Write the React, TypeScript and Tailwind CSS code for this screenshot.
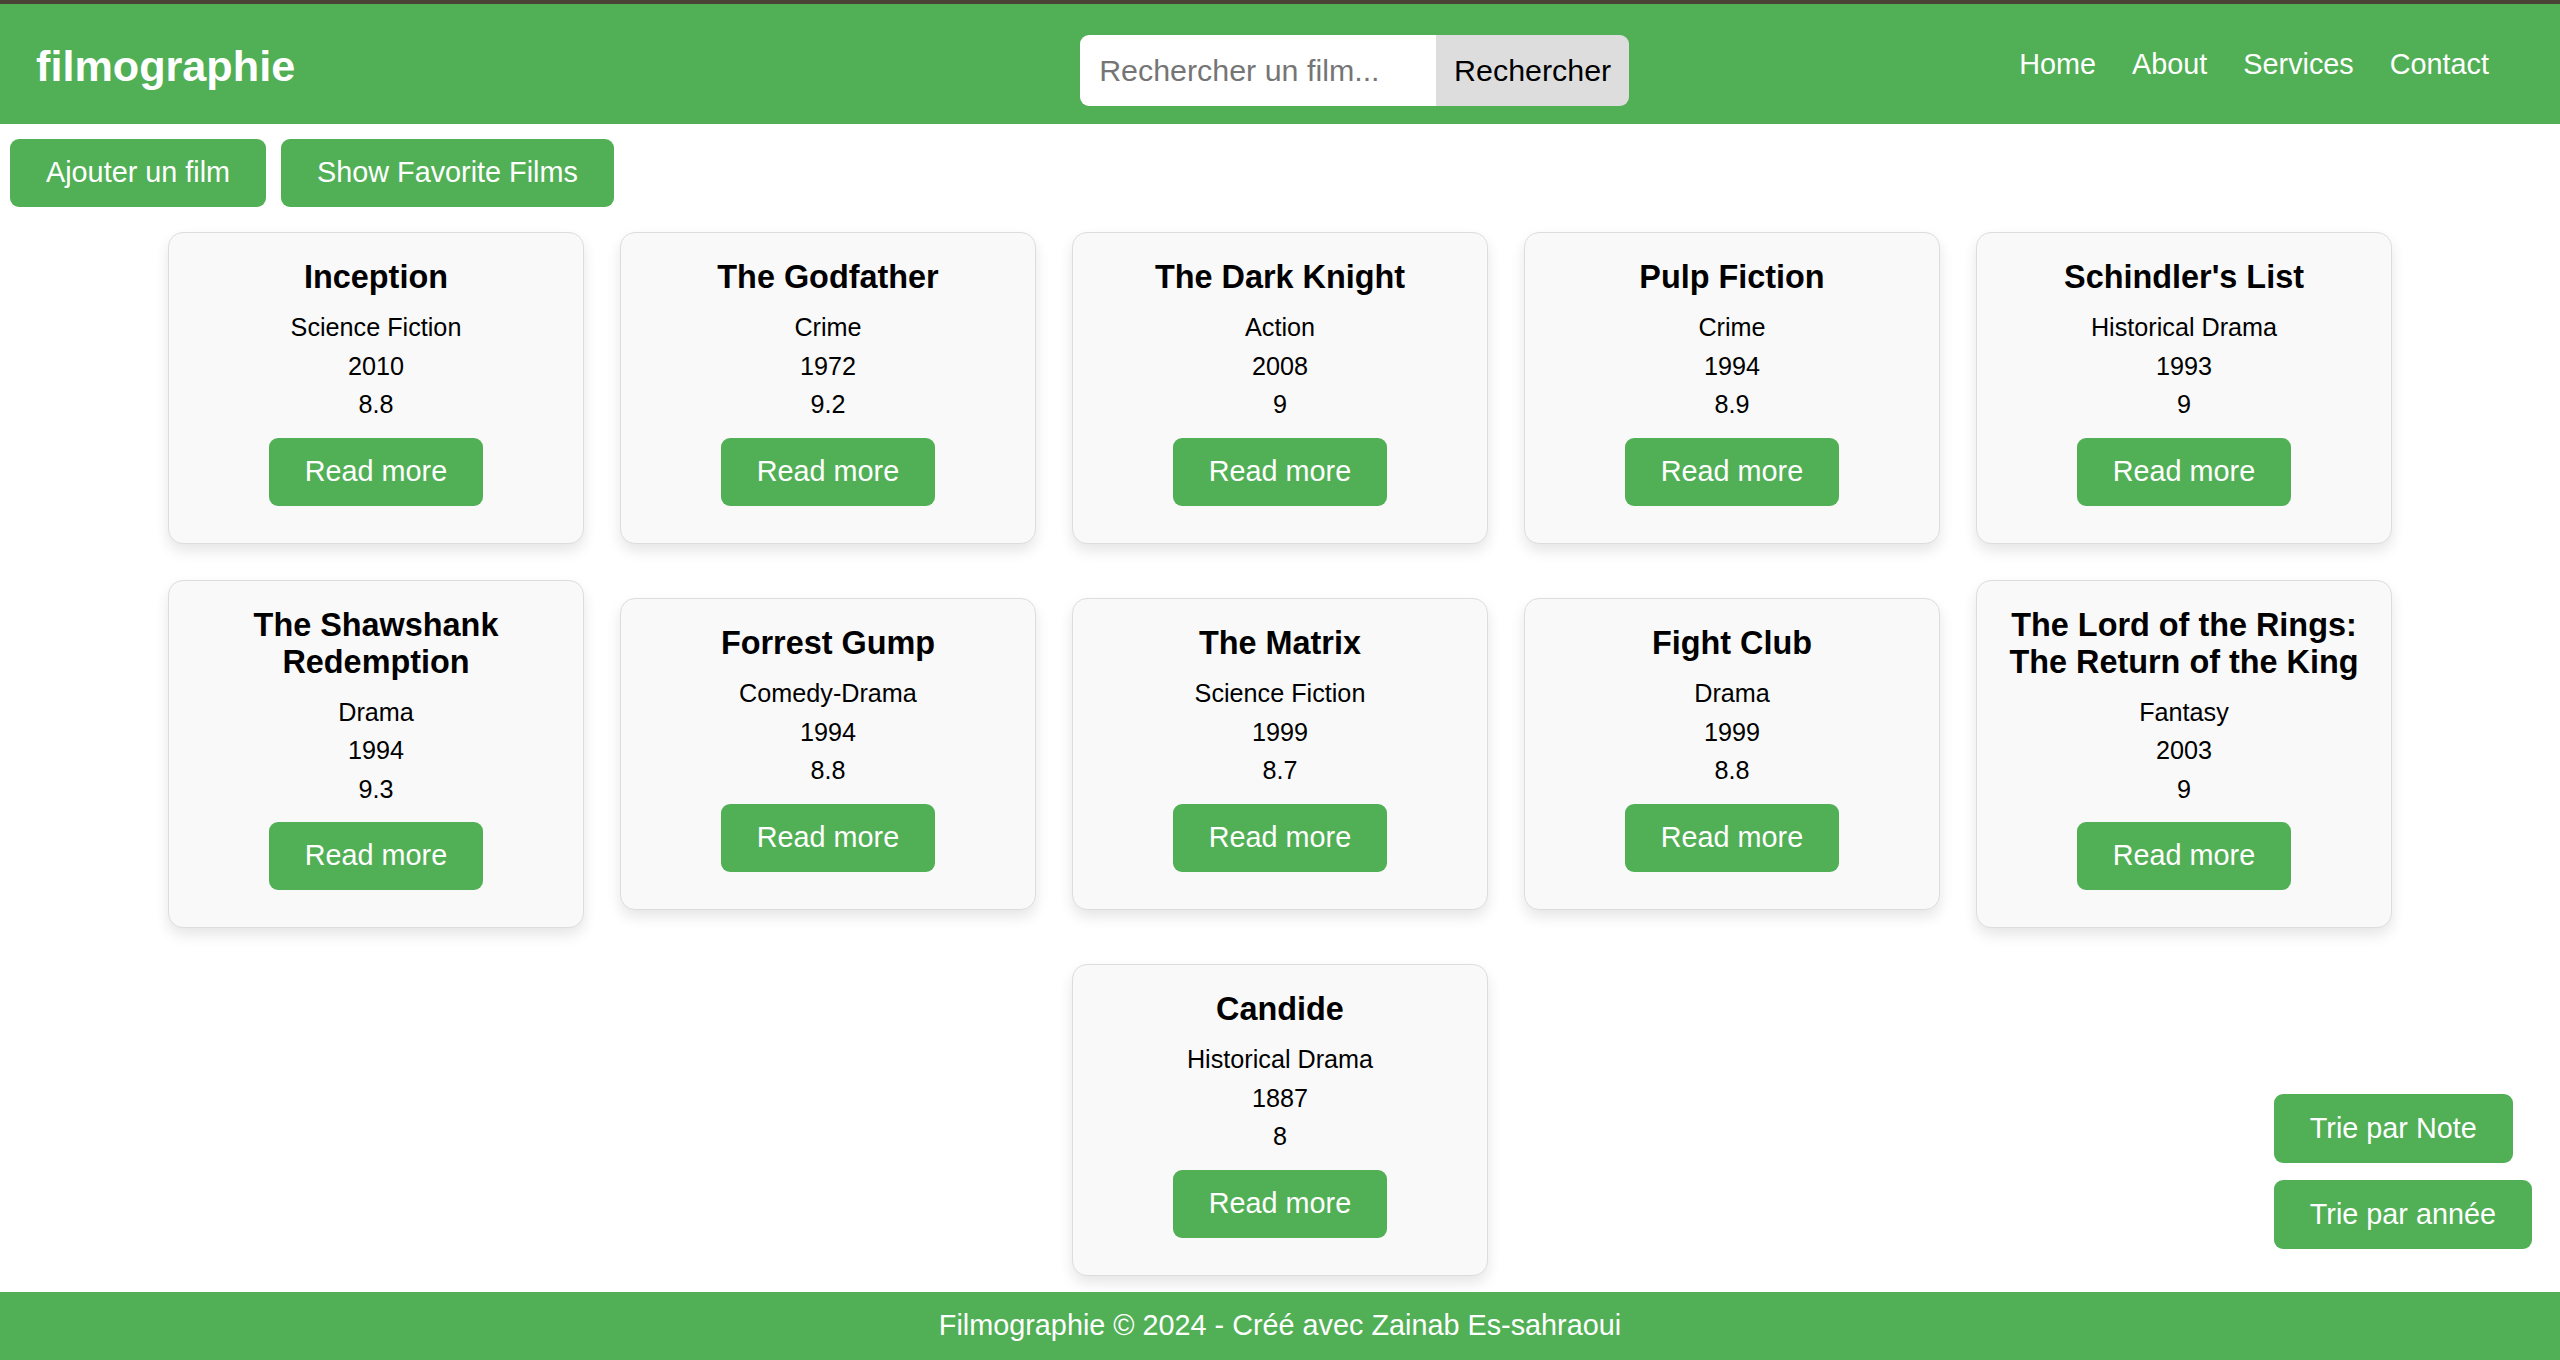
import React from 'react';

type Film = { title: string; genre: string; year: number; rating: number };

const films: Film[] = [
  { title: 'Inception', genre: 'Science Fiction', year: 2010, rating: 8.8 },
  { title: 'The Godfather', genre: 'Crime', year: 1972, rating: 9.2 },
  { title: 'The Dark Knight', genre: 'Action', year: 2008, rating: 9 },
  { title: 'Pulp Fiction', genre: 'Crime', year: 1994, rating: 8.9 },
  { title: "Schindler's List", genre: 'Historical Drama', year: 1993, rating: 9 },
  { title: 'The Shawshank Redemption', genre: 'Drama', year: 1994, rating: 9.3 },
  { title: 'Forrest Gump', genre: 'Comedy-Drama', year: 1994, rating: 8.8 },
  { title: 'The Matrix', genre: 'Science Fiction', year: 1999, rating: 8.7 },
  { title: 'Fight Club', genre: 'Drama', year: 1999, rating: 8.8 },
  { title: 'The Lord of the Rings: The Return of the King', genre: 'Fantasy', year: 2003, rating: 9 },
  { title: 'Candide', genre: 'Historical Drama', year: 1887, rating: 8 },
];

const FilmCard = (props: { film: Film }): React.ReactNode => {
  const { film } = props;
  return (
    <div className="m-[18px] w-[416px] rounded-[15px] border border-[#dddddd] bg-[#f9f9f9] px-[27px] pt-[26px] pb-[37px] text-center shadow-[0_7px_14px_rgba(0,0,0,0.1)]">
      <h3 className="mb-[17px] text-[32.4px] leading-[37px] font-bold text-black">{film.title}</h3>
      <p className="text-[25.2px] leading-[29px] text-black">{film.genre}</p>
      <p className="mt-[9.5px] text-[25.2px] leading-[29px] text-black">{film.year}</p>
      <p className="mt-[9.5px] text-[25.2px] leading-[29px] text-black">{film.rating}</p>
      <button className="mt-[18.5px] h-[68px] rounded-[9px] bg-[#51af55] px-[36px] text-[28.8px] text-white">
        Read more
      </button>
    </div>
  );
};

export default function App() {
  return (
    <div className="min-h-[1360px] bg-white font-['Liberation_Sans',Arial,sans-serif]">
      <div className="h-[4px] bg-[#4b4236]" />
      <header className="flex h-[120px] items-center bg-[#51af55] pl-[36px]">
        <h1 className="mt-[6px] text-[43.2px] leading-none font-bold text-white">filmographie</h1>
        <form className="mt-[13px] ml-[785px] flex h-[71px]" onSubmit={e => e.preventDefault()}>
          <input
            type="text"
            placeholder="Rechercher un film..."
            className="w-[356px] rounded-l-[9px] bg-white pl-[19px] text-[30.4px] text-black outline-none placeholder:text-[#757575]"
          />
          <button className="w-[193px] rounded-r-[9px] bg-[#dddddd] text-[30.4px] text-black">Rechercher</button>
        </form>
        <nav className="mt-[2px] mr-[71px] ml-auto flex gap-[36px] text-[28.8px] text-white">
          <a href="#">Home</a>
          <a href="#">About</a>
          <a href="#">Services</a>
          <a href="#">Contact</a>
        </nav>
      </header>

      <div className="flex gap-[15px] pt-[15px] pl-[10px]">
        <button className="h-[68px] rounded-[9px] bg-[#51af55] px-[36px] text-[28.8px] text-white">
          Ajouter un film
        </button>
        <button className="h-[68px] rounded-[9px] bg-[#51af55] px-[36px] text-[28.8px] text-white">
          Show Favorite Films
        </button>
      </div>

      <main className="mt-[7px] -mb-[2px] flex flex-wrap items-center justify-center">
        {films.map(f => (
          <FilmCard key={f.title} film={f} />
        ))}
      </main>

      <footer className="relative flex h-[69px] items-center justify-center bg-[#51af55] text-[28.8px] text-white">
        Filmographie © 2024 - Créé avec Zainab Es-sahraoui
      </footer>

      <div className="fixed right-[28px] bottom-[111px] flex flex-col items-start gap-[17px]">
        <button className="h-[69px] rounded-[9px] bg-[#51af55] px-[36px] text-[28.8px] text-white">
          Trie par Note
        </button>
        <button className="h-[69px] rounded-[9px] bg-[#51af55] px-[36px] text-[28.8px] text-white">
          Trie par année
        </button>
      </div>
    </div>
  );
}
